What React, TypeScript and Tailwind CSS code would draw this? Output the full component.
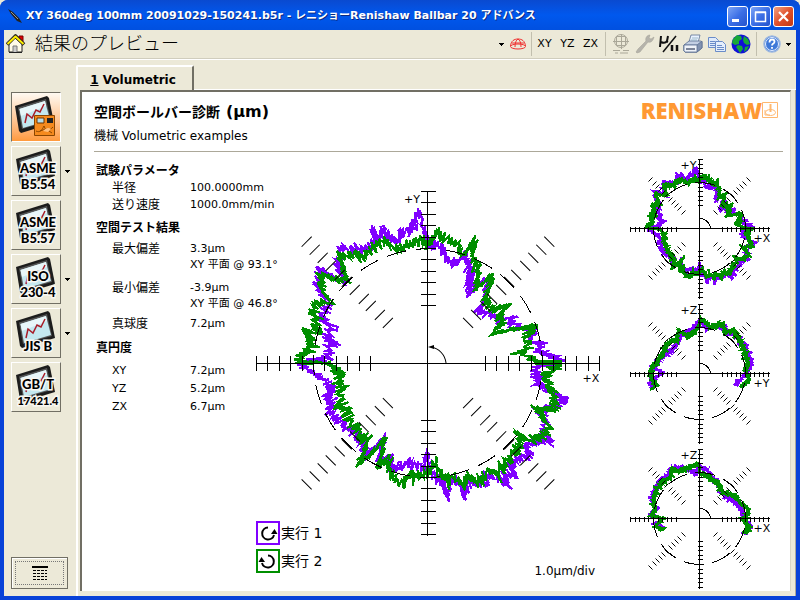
import React from "react";

type Pt = [number, number];

const SANS = "font-['DejaVu_Sans','Noto_Sans_CJK_JP',sans-serif]";
const PURPLE = "#8000ff";
const GREEN = "#008f00";

/* Ballbar traces, in pixels from the plot centre at full scale */
const from = (cx: number, cy: number, k: number, pts: Pt[]): Pt[] =>
  pts.map(([x, y]) => [(x - cx) * k, (y - cy) * k]);

const xyGreen = from(427.5, 363.5, 1, [
  [427, 245], [437, 232], [445, 240], [453, 243], [460, 252], [468, 252], [472, 243], [473, 262], [478, 265],
  [475, 288], [492, 277], [488, 288], [484, 303], [492, 310], [508, 305], [498, 317], [503, 322], [494, 333],
  [520, 328], [533, 328], [525, 340], [528, 347], [518, 352], [535, 360], [537, 363], [559, 363], [553, 367],
  [543, 377], [548, 383], [553, 397], [555, 403], [553, 410], [534, 409], [541, 417], [548, 428], [541, 437],
  [533, 440], [523, 438], [517, 434], [520, 443], [510, 457], [505, 467], [498, 473], [485, 473], [480, 483],
  [467, 477], [463, 485], [453, 478], [443, 480], [435, 463], [427, 472], [420, 477], [410, 473], [405, 483],
  [393, 480], [387, 460], [379, 467], [383, 442], [360, 463], [365, 447], [360, 433], [353, 425], [347, 417],
  [343, 407], [340, 397], [340, 387], [338, 373], [327, 363], [299, 363], [299, 358], [313, 347], [304, 330],
  [317, 333], [315, 320], [313, 305], [329, 302], [323, 293], [320, 275], [335, 280], [347, 280], [338, 258],
  [350, 255], [363, 258], [373, 248], [383, 242], [390, 247], [400, 250], [410, 242], [422, 242], [427, 245],
]);
const xyPurple = from(427.5, 363.5, 1, [
  [419, 213], [423, 230], [427, 243], [433, 247], [440, 245], [445, 260], [453, 262], [458, 262], [465, 256],
  [470, 268], [468, 285], [472, 275], [469, 296], [480, 283], [487, 280], [485, 295], [483, 305], [477, 312],
  [490, 315], [500, 320], [515, 317], [508, 325], [520, 328], [533, 332], [530, 342], [543, 343], [537, 352],
  [555, 357], [560, 362], [535, 367], [534, 378], [540, 377], [538, 385], [553, 395], [565, 398], [553, 407],
  [537, 412], [545, 422], [543, 433], [552, 441], [535, 442], [523, 447], [531, 454], [517, 460], [508, 467],
  [516, 477], [503, 473], [508, 486], [493, 475], [483, 483], [467, 483], [464, 498], [460, 483], [450, 482],
  [446, 498], [443, 483], [433, 477], [427, 452], [423, 468], [418, 467], [410, 463], [400, 467], [392, 472],
  [388, 457], [378, 463], [383, 440], [363, 460], [364, 443], [353, 433], [337, 420], [330, 410], [332, 400],
  [325, 398], [333, 390], [325, 380], [315, 375], [300, 365], [327, 358], [330, 347], [336, 344], [325, 340],
  [332, 327], [323, 323], [325, 313], [328, 302], [318, 290], [318, 270], [330, 275], [345, 283], [338, 267],
  [340, 248], [353, 250], [367, 250], [375, 243], [371, 229], [378, 240], [383, 228], [388, 238], [398, 242],
  [402, 231], [410, 232], [415, 221], [419, 213],
]);
const K = 0.825;
const yzGreen = from(238, 671, K, [
  [365, 710], [388, 690], [375, 660], [385, 640], [370, 600], [360, 570], [340, 540], [315, 550], [310, 522],
  [270, 530], [240, 505], [238, 520], [225, 545], [200, 560], [175, 540], [170, 570], [140, 580], [120, 625],
  [97, 650], [90, 680], [108, 708], [95, 718],
]);
const yzPurple = from(238, 671, K, [
  [347, 705], [365, 685], [393, 650], [390, 630], [375, 585], [350, 560], [330, 550], [300, 525], [260, 535],
  [235, 512], [220, 535], [190, 550], [165, 590], [140, 610], [110, 640], [100, 655], [128, 668], [85, 700],
  [102, 710],
]);
const zxGreen = from(238, 268, K, [
  [372, 313], [385, 295], [372, 270], [386, 240], [360, 220], [345, 200], [310, 190], [290, 160], [260, 140],
  [240, 130], [235, 102], [210, 115], [175, 125], [155, 120], [150, 145], [130, 155], [110, 180], [100, 210],
  [105, 240], [95, 262], [128, 268], [106, 290], [125, 303], [133, 296],
]);
const zxPurple = from(238, 268, K, [
  [375, 313], [393, 290], [370, 265], [365, 240], [350, 225], [330, 210], [300, 185], [290, 160], [265, 128],
  [238, 108], [225, 135], [190, 115], [150, 120], [145, 140], [120, 155], [100, 190], [95, 215], [110, 235],
  [88, 262], [124, 266], [106, 285], [133, 296],
]);

function trace(pts: Pt[], scale: number, amp: number, seed: number): string {
  let s = seed;
  const rnd = () => {
    s = (s * 1103515245 + 12345) % 2147483648;
    return s / 2147483648;
  };
  const out: string[] = [];
  for (let i = 0; i < pts.length - 1; i++) {
    const [ax, ay] = pts[i];
    const [bx, by] = pts[i + 1];
    const n = Math.max(3, Math.round(Math.hypot(bx - ax, by - ay) / 1.1));
    for (let j = 0; j < n; j++) {
      const t = j / n;
      const x = ax + (bx - ax) * t;
      const y = ay + (by - ay) * t;
      const r = Math.hypot(x, y);
      const spike = rnd() > 0.92 ? 1.8 : 1;
      const d = (j % 2 ? 1 : -1) * (0.2 + 0.8 * rnd()) * amp * spike;
      const skew = (rnd() - 0.5) * 4;
      const px = (x + (x / r) * d - (y / r) * skew) * scale;
      const py = (y + (y / r) * d + (x / r) * skew) * scale;
      out.push(px.toFixed(1) + "," + py.toFixed(1));
    }
  }
  return out.join(" ");
}

function Axes({ step, half, diag, radius, dash, offset }: { step: number; half: number; diag: number; radius: number; dash: string; offset: number }) {
  const ticks = Array.from({ length: 11 }, (_, i) => Math.round(radius / 2 + i * step));
  const end = ticks[10];
  const d = diag;
  return (
    <g stroke="#000" fill="none" shapeRendering="crispEdges">
      <path d={`M${-end} 0H${end + 1}M0 ${-end}V${end + 1}`} />
      {ticks.map((t) => (
        <path key={t} d={`M${t} ${-half}V${half + 1}M${-t} ${-half}V${half + 1}M${-half} ${t}H${half + 1}M${-half} ${-t}H${half + 1}`} />
      ))}
      {ticks.map((t) => {
        const q = Math.round(t * 0.707);
        return (
          <path
            key={t}
            shapeRendering="geometricPrecision"
            d={`M${q - d} ${-q - d}l${2 * d} ${2 * d}M${-q - d} ${q - d}l${2 * d} ${2 * d}M${q - d} ${q + d}l${2 * d} ${-2 * d}M${-q - d} ${-q + d}l${2 * d} ${-2 * d}`}
          />
        );
      })}
      <circle r={radius} pathLength={360} strokeDasharray={dash} strokeDashoffset={offset} />
    </g>
  );
}

function MainPlot() {
  return (
    <svg viewBox="0 0 360 360" className="block w-full overflow-visible" role="img" aria-label="Volumetric XY">
      <g transform="translate(173.5 202.5)">
        <g fill="none" strokeWidth={2} shapeRendering="crispEdges">
          <polyline points={trace(xyPurple, 1, 6, 11)} stroke={PURPLE} />
          <polyline points={trace(xyGreen, 1, 6.5, 47)} stroke={GREEN} />
        </g>
        <Axes step={11.4} half={7} diag={5} radius={114} dash="10 5" offset={-9} />
        <path d="M18 0A18 18 0 0 0 3 -16" fill="none" stroke="#000" />
        <path d="M0 -16l6 -2v4z" />
        <text x={-24} y={-160} className={`${SANS} text-[11px]`}>+Y</text>
        <text x={154} y={19} className={`${SANS} text-[11px]`}>+X</text>
      </g>
    </svg>
  );
}

function SmallPlot({ v, h, purple, green, seed }: { v: string; h: string; purple: Pt[]; green: Pt[]; seed: number }) {
  return (
    <svg viewBox="0 0 142 142" className="block h-[142px] w-[142px] overflow-visible" role="img" aria-label={v + " " + h}>
      <g transform="translate(71.5 71.5)">
        <g fill="none" strokeWidth={2} shapeRendering="crispEdges">
          <polyline points={trace(purple, 0.404, 7, seed)} stroke={PURPLE} />
          <polyline points={trace(green, 0.404, 8, seed + 5)} stroke={GREEN} />
        </g>
        <Axes step={4.6} half={2} diag={2} radius={46} dash="26 10" offset={-12} />
        <path d="M11 0A11 11 0 0 0 2 -10L0 -10" fill="none" stroke="#000" shapeRendering="crispEdges" />
        <text x={-19} y={-60} className={`${SANS} text-[11px]`}>{v}</text>
        <text x={54} y={13} className={`${SANS} text-[11px]`}>{h}</text>
      </g>
    </svg>
  );
}

function MonitorIcon() {
  return (
    <>
      <path d="M3 12L35 2l2 2 5 25-33 10-2-2z" fill="#1c1c1c" />
      <path d="M6 13.500L34 5l5 22-29 8z" fill="#555" />
      <path d="M7.500 15L33 7l5 19-27 8z" fill="#c4e8f0" />
      <path d="M7.500 15L33 7l1 5L9 22z" fill="#e8f6f9" />
      <path d="M13 29l2-9 5 4 4-8 4 2 4-8" fill="none" stroke="#a81c28" strokeWidth={1.500} />
    </>
  );
}

function SideButton({ lines, sizes, menu, selected, y = [26, 42], label }: { lines: string[]; sizes: number[]; menu?: boolean; selected?: boolean; y?: number[]; label: string }) {
  return (
    <div className="flex items-center">
      <button
        type="button"
        aria-label={label}
        className={
          selected
            ? "h-[50px] w-[50px] border border-t-[#716f64] border-r-white border-b-white border-l-[#716f64] bg-linear-to-b from-[#fffaf2] to-[#ff9a3c]"
            : "h-[50px] w-[50px] border border-t-white border-r-[#716f64] border-b-[#716f64] border-l-white bg-[#ece9d8]"
        }
      >
        <svg viewBox="0 0 48 48" className="block h-12 w-12">
          <g transform={selected ? "translate(0 1)" : "translate(1 0)"}>
            <MonitorIcon />
          </g>
          {selected && (
            <g>
              <path d="M22.500 22.500h20v20h-20z" fill="#f58a1e" stroke="#8a4500" />
              <path d="M25 25h7v5h-7z" fill="#b6dce8" stroke="#6b3500" />
              <path d="M35 25h6v5h-6z" fill="#222" />
              <path d="M24 38c4 2 6-1 8-5 2 6 5 5 9 1M28 38l6-2 6 4" fill="none" stroke="#8a4500" />
              <path d="M31 38q4-5 8-2l-3 3z" fill="#ffc080" />
            </g>
          )}
          {lines.map((t, i) => (
            <text
              key={t}
              x="26"
              y={y[i]}
              textAnchor="middle"
              fontSize={sizes[i]}
              className="font-['Lato','DejaVu_Sans',sans-serif] font-black"
              stroke="#f8f7f2"
              strokeWidth={3}
              paintOrder="stroke"
            >
              {t}
            </text>
          ))}
        </svg>
      </button>
      {menu && (
        <button type="button" aria-label={label + " menu"} className="flex h-[50px] w-3 items-center justify-center">
          <Arrow />
        </button>
      )}
    </div>
  );
}

function Arrow() {
  return (
    <svg viewBox="0 0 5 3" className="h-[3px] w-[5px]" shapeRendering="crispEdges">
      <path d="M0 0h5L2.500 3z" />
    </svg>
  );
}

function Tool({ label, children, narrow }: { label: string; children: React.ReactNode; narrow?: boolean }) {
  return (
    <button type="button" aria-label={label} className={`flex h-6 items-center justify-center text-[11px] ${narrow ? "w-[23px]" : "w-6"}`}>
      {children}
    </button>
  );
}

function Sep({ tight }: { tight?: boolean }) {
  return <div className={`h-6 w-px bg-[#c2bfae] ${tight ? "mx-px" : "mx-[3px]"}`} />;
}

function TitleButton({ label, close, children }: { label: string; close?: boolean; children: React.ReactNode }) {
  return (
    <button
      type="button"
      aria-label={label}
      className={`flex h-[21px] w-[21px] items-center justify-center rounded-[3px] border border-white ${
        close ? "bg-linear-to-br from-[#f0a080] via-[#e0502c] to-[#c03810]" : "bg-linear-to-br from-[#7da4f5] via-[#3c6fe6] to-[#2453cc]"
      }`}
    >
      <svg viewBox="0 0 19 19" className="h-[19px] w-[19px]" fill="none" stroke="#fff">
        {children}
      </svg>
    </button>
  );
}

function Toolbar() {
  return (
    <div className="flex h-[29px] items-center border-b border-[#d0cdbd] pr-1 pl-[2px] shadow-[0_1px_0_#fff]">
      <button type="button" aria-label="Home" className="h-5 w-5">
        <svg viewBox="0 0 20 20" className="h-5 w-5" strokeLinejoin="round">
          <path d="M13 2h4v9h-4z" fill="#e00000" stroke="#700" />
          <path d="M3 10l6-6 7 6v8H3z" fill="#fffbe8" stroke="#222" />
          <path d="M1 10.500L9.500 2 18 10.500" fill="none" stroke="#222" strokeWidth={3.600} />
          <path d="M1.500 10L9.500 2.500 17.500 10" fill="none" stroke="#ffee00" strokeWidth={2} />
          <path d="M7 18v-6h4v6" fill="#ccc" stroke="#777" />
          <path d="M3 18.500h13" stroke="#222" />
        </svg>
      </button>
      <h1 className="ml-[9px] flex-1 text-[18px] leading-6 font-light whitespace-nowrap">結果のプレビュー</h1>
      <button type="button" aria-label="View menu" className="flex h-6 w-[10px] items-center justify-center"><Arrow /></button>
      <Tool label="Dome">
        <svg viewBox="0 0 18 14" className="h-[14px] w-[18px]" fill="none" stroke="#f03030" strokeWidth={1}>
          <path d="M1.500 9C2 4 5 2 9 2s7 2 7.500 7M6 10C6 6 7 3 9 2c2 1 3 4 3 8M3 6h12" />
          <ellipse cx="9" cy="9.500" rx="7.500" ry="2.500" />
        </svg>
      </Tool>
      <Sep tight />
      <Tool label="XY" narrow>XY</Tool>
      <Tool label="YZ" narrow>YZ</Tool>
      <Tool label="ZX" narrow>ZX</Tool>
      <Sep />
      <Tool label="Ballbar plot">
        <svg viewBox="0 0 18 20" className="h-5 w-[18px]" fill="none" stroke="#aaa798">
          <circle cx="9" cy="7" r="6.500" />
          <path d="M4.500 2.500h9v9h-9zM1 7.500h16M9.500 0v15M1 16.500h7m3 0h6M3 19h3m2 0h8" />
        </svg>
      </Tool>
      <Tool label="Settings">
        <svg viewBox="0 0 20 20" className="h-5 w-5">
          <path d="M1 18l1 1 3-1 8-10c3 1 5-1 6-5l-3 2-2-1 1-3c-3 0-5 3-4 6L3 15z" fill="#b5b3ab" stroke="#a09e94" strokeWidth={0.500} />
        </svg>
      </Tool>
      <Tool label="Units">
        <svg viewBox="0 0 20 20" className="h-5 w-5" fill="none" stroke="#111" strokeWidth={2}>
          <path d="M2 2L1 13M2 8q4 2 6-1l1-5M7 7l2 1" />
          <path d="M17 2L4 18" strokeWidth={1.500} />
          <path d="M13 11v6M18 11v6" strokeWidth={2.500} />
        </svg>
      </Tool>
      <Tool label="Print">
        <svg viewBox="0 0 20 20" className="h-5 w-5" stroke="#5b6f92" strokeWidth={0.800} strokeLinejoin="round">
          <path d="M6 8l2-7h9l-2 8z" fill="#e9f2ff" />
          <path d="M1 11l5-4h12l1 1v6l-5 4H2l-1-1z" fill="#c3cfe3" />
          <path d="M1 11h13l5-4v7l-5 4H2l-1-1z" fill="#8192b0" />
          <path d="M1 11h13v7H2l-1-1z" fill="#eef2f8" />
          <path d="M3 15h9" stroke="#56617a" strokeWidth={1.500} />
          <path d="M9 4h6M8 6h6" stroke="#8ab" />
        </svg>
      </Tool>
      <Tool label="Copy">
        <svg viewBox="0 0 20 20" className="h-5 w-5" stroke="#6a8cc8">
          <path d="M1.500 3.500h7l3 3v7h-10z" fill="#dfeafa" />
          <path d="M3 7.500h5M3 9.500h5M3 11.500h5" />
          <path d="M8.500 7.500h7l3 3v7h-10z" fill="#e4eefc" />
          <path d="M10 11.500h5M10 13.500h7M10 15.500h7" />
        </svg>
      </Tool>
      <Tool label="Web">
        <svg viewBox="0 0 20 20" className="h-5 w-5">
          <circle cx="10" cy="10" r="9.500" fill="#1010d8" />
          <path d="M2 5l4-4 4 1 1 3-3 2v3l-4 1-3-2zM13 2l4 3 2 5-3 1-3-2-1-3zM7 11l4 1 1 3-3 4-2-3-2-3zM14 13l4-1-2 4-3 2z" fill="#18a838" />
        </svg>
      </Tool>
      <Sep />
      <Tool label="Help">
        <svg viewBox="0 0 18 18" className="h-[18px] w-[18px]">
          <circle cx="9" cy="9" r="8" fill="#3f79d8" stroke="#9ab6e0" strokeWidth={1.500} />
          <circle cx="9" cy="9" r="6.500" fill="none" stroke="#e6efff" />
          <path d="M6.500 7.500q0-3 2.500-3t2.500 2.300q0 1.200-1.500 2-1 .6-1 1.700M9 12v1.800" fill="none" stroke="#fff" strokeWidth={1.800} />
        </svg>
      </Tool>
      <button type="button" aria-label="Help menu" className="flex h-6 w-2 items-center justify-center"><Arrow /></button>
    </div>
  );
}

function Results() {
  const head = "text-left text-[12px] font-bold";
  const name = "w-[94px] pl-4 text-left align-top text-[12px] font-normal";
  const plain = "w-[94px] pl-4 text-left align-top font-normal";
  const val = "align-top";
  return (
    <table className="ml-[2px] w-max border-collapse text-[11px] leading-4 whitespace-nowrap">
      <tbody>
        <tr className="h-[18px]"><th colSpan={2} className={head}>試験パラメータ</th></tr>
        <tr className="h-[17px]"><th scope="row" className={name}>半径</th><td className={val}>100.0000mm</td></tr>
        <tr className="h-[17px]"><th scope="row" className={name}>送り速度</th><td className={val}>1000.0mm/min</td></tr>
        <tr className="h-[27px]"><th colSpan={2} className={head}>空間テスト結果</th></tr>
        <tr className="h-[39px]"><th scope="row" className={name}>最大偏差</th><td className={val}>3.3µm<br />XY 平面 @ 93.1°</td></tr>
        <tr className="h-[36px]"><th scope="row" className={name}>最小偏差</th><td className={val}>-3.9µm<br />XY 平面 @ 46.8°</td></tr>
        <tr className="h-[17px]"><th scope="row" className={name}>真球度</th><td className={val}>7.2µm</td></tr>
        <tr className="h-[30px]"><th colSpan={2} className={head}>真円度</th></tr>
        <tr className="h-[18px]"><th scope="row" className={plain}>XY</th><td className={val}>7.2µm</td></tr>
        <tr className="h-[18px]"><th scope="row" className={plain}>YZ</th><td className={val}>5.2µm</td></tr>
        <tr className="h-[18px]"><th scope="row" className={plain}>ZX</th><td className={val}>6.7µm</td></tr>
      </tbody>
    </table>
  );
}

function RunKey({ text, flip }: { text: string; flip?: boolean }) {
  return (
    <div className="flex items-center gap-px text-[14px] leading-6">
      <div className={`h-6 w-6 border-2 ${flip ? "border-[#008f00]" : "border-[#8000ff]"}`}>
        <svg viewBox="0 0 20 20" className="block h-5 w-5">
          <g transform={flip ? "matrix(-1 0 0 1 20 0)" : undefined}>
            <path d="M10 4.500A6 6 0 1 0 16 12" fill="none" stroke="#000" strokeWidth={2} />
            <path d="M13 11l3.500-5 3 5z" />
          </g>
        </svg>
      </div>
      <span>{text}</span>
    </div>
  );
}

export default function App() {
  return (
    <div className={`${SANS} bg-[#ece9d8] text-black`}>
      <div className="flex min-h-screen flex-col rounded-t-[8px] bg-[#0842d8]">
        <header className="flex h-[30px] items-center gap-[2px] rounded-t-[8px] bg-linear-to-b from-[#0a4ad0] via-[#0058ee] to-[#0050e0] pt-[2px] pr-[6px] pl-[7px]">
          <svg viewBox="0 0 16 16" className="h-4 w-4">
            <path d="M1 1l5 3 6 6 3 5-5-2-6-7z" fill="#222" />
            <path d="M4 4l7 7" stroke="#999" />
          </svg>
          <span className="ml-px flex-1 overflow-hidden text-[11px] font-bold whitespace-nowrap text-white [text-shadow:1px_1px_0_#0a2a80]">
            XY 360deg 100mm 20091029-150241.b5r - レニショーRenishaw Ballbar 20 アドバンス
          </span>
          <TitleButton label="Minimize"><path d="M4 13.500h7" strokeWidth={3} /></TitleButton>
          <TitleButton label="Maximize"><path d="M4.500 5.500h10v9h-10zM4 5h11" strokeWidth={1.500} /></TitleButton>
          <TitleButton label="Close" close><path d="M5 5l9 9M14 5l-9 9" strokeWidth={2.200} /></TitleButton>
        </header>
        <div className="mx-1 mb-1 flex flex-1 flex-col bg-[#ece9d8]">
          <Toolbar />
          <div className="flex flex-1">
            <nav className="flex w-[72px] shrink-0 flex-col gap-1 pt-[33px] pb-[7px] pl-[7px]">
              <SideButton label="Volumetric report" selected lines={[]} sizes={[]} />
              <SideButton label="ASME B5.54" menu lines={["ASME", "B5.54"]} sizes={[13, 13]} />
              <SideButton label="ASME B5.57" lines={["ASME", "B5.57"]} sizes={[13, 13]} />
              <SideButton label="ISO 230-4" menu lines={["ISO", "230-4"]} sizes={[13, 13]} />
              <SideButton label="JIS B" menu lines={["JIS B"]} sizes={[13]} y={[42]} />
              <SideButton label="GB/T 17421.4" lines={["GB/T", "17421.4"]} sizes={[13, 11]} />
              <button type="button" aria-label="Report list" className="mt-auto flex h-8 w-[57px] items-center justify-center border border-[#716f64] bg-[#ece9d8] p-[3px] shadow-[inset_1px_1px_0_#fff]">
                <span className="flex h-full w-full items-center justify-center border border-dotted border-[#777]">
                  <svg viewBox="0 0 16 14" className="h-[14px] w-4" shapeRendering="crispEdges">
                    <path d="M0 1h16" stroke="#000" strokeWidth={2} />
                    <path d="M1 4.500h14M1 7.500h14M1 10.500h14M1 13.500h14" stroke="#000" strokeDasharray="3 1" />
                  </svg>
                </span>
              </button>
            </nav>
            <main className="flex min-w-0 flex-1 flex-col pt-[6px]">
              <div className="flex">
                <button type="button" className="h-[25px] w-[118px] rounded-t-[2px] border-t-2 border-r-2 border-l-2 border-t-white border-r-[#716f64] border-l-white pt-[2px] pr-1 text-[12px] font-bold">
                  <u>1</u> Volumetric
                </button>
                <div className="flex-1 border-b border-white" />
              </div>
              <div className="flex flex-1 border-r border-l-2 border-[#fff] border-r-[#aca899] pr-1 pb-[5px] pl-[2px]">
                <section className="flex-1 border-t-2 border-r border-l-2 border-[#716f64] border-r-[#d8d5c5] bg-white pr-[7px] pl-3">
                  <div className="flex h-[60px] items-start justify-between border-b border-[#aca899] pt-2">
                    <div>
                      <h2 className="flex h-6 items-center gap-[6px] font-bold whitespace-nowrap">
                        <span className="text-[14px]">空間ボールバー診断</span>
                        <span className="text-[16px]">(µm)</span>
                      </h2>
                      <p className="text-[12px] leading-6">機械 Volumetric examples</p>
                    </div>
                    <div className="mr-[5px] flex items-center text-[#ff9933]">
                      <span className="font-['Open_Sans','DejaVu_Sans',sans-serif] text-[22px] leading-5 font-extrabold">RENISHAW</span>
                      <svg viewBox="0 0 16 16" className="h-4 w-4" fill="none" stroke="#ffb870">
                        <path d="M.5.500h15v15H.5z" />
                        <path d="M8.500 2v8" strokeWidth={2} />
                        <ellipse cx="8.500" cy="10.500" rx="5" ry="3" />
                        <path d="M3 8v5h5" />
                      </svg>
                    </div>
                  </div>
                  <div className="flex">
                    <div className="w-40 shrink-0 pt-[10px]">
                      <Results />
                    </div>
                    <div className="min-w-0 flex-1 pt-2">
                      <MainPlot />
                      <div className="flex h-[58px] items-end justify-between pr-5 pl-[2px]">
                        <div className="flex flex-col gap-1 self-start">
                          <RunKey text="実行 1" />
                          <RunKey text="実行 2" flip />
                        </div>
                        <span className="text-[12px] leading-4">1.0µm/div</span>
                      </div>
                    </div>
                    <div className="flex w-[168px] shrink-0 flex-col gap-[3px] pt-[5px] pl-[13px]">
                      <SmallPlot v="+Y" h="+X" purple={xyPurple} green={xyGreen} seed={3} />
                      <SmallPlot v="+Z" h="+Y" purple={yzPurple} green={yzGreen} seed={21} />
                      <SmallPlot v="+Z" h="+X" purple={zxPurple} green={zxGreen} seed={33} />
                    </div>
                  </div>
                </section>
              </div>
            </main>
          </div>
        </div>
      </div>
    </div>
  );
}
